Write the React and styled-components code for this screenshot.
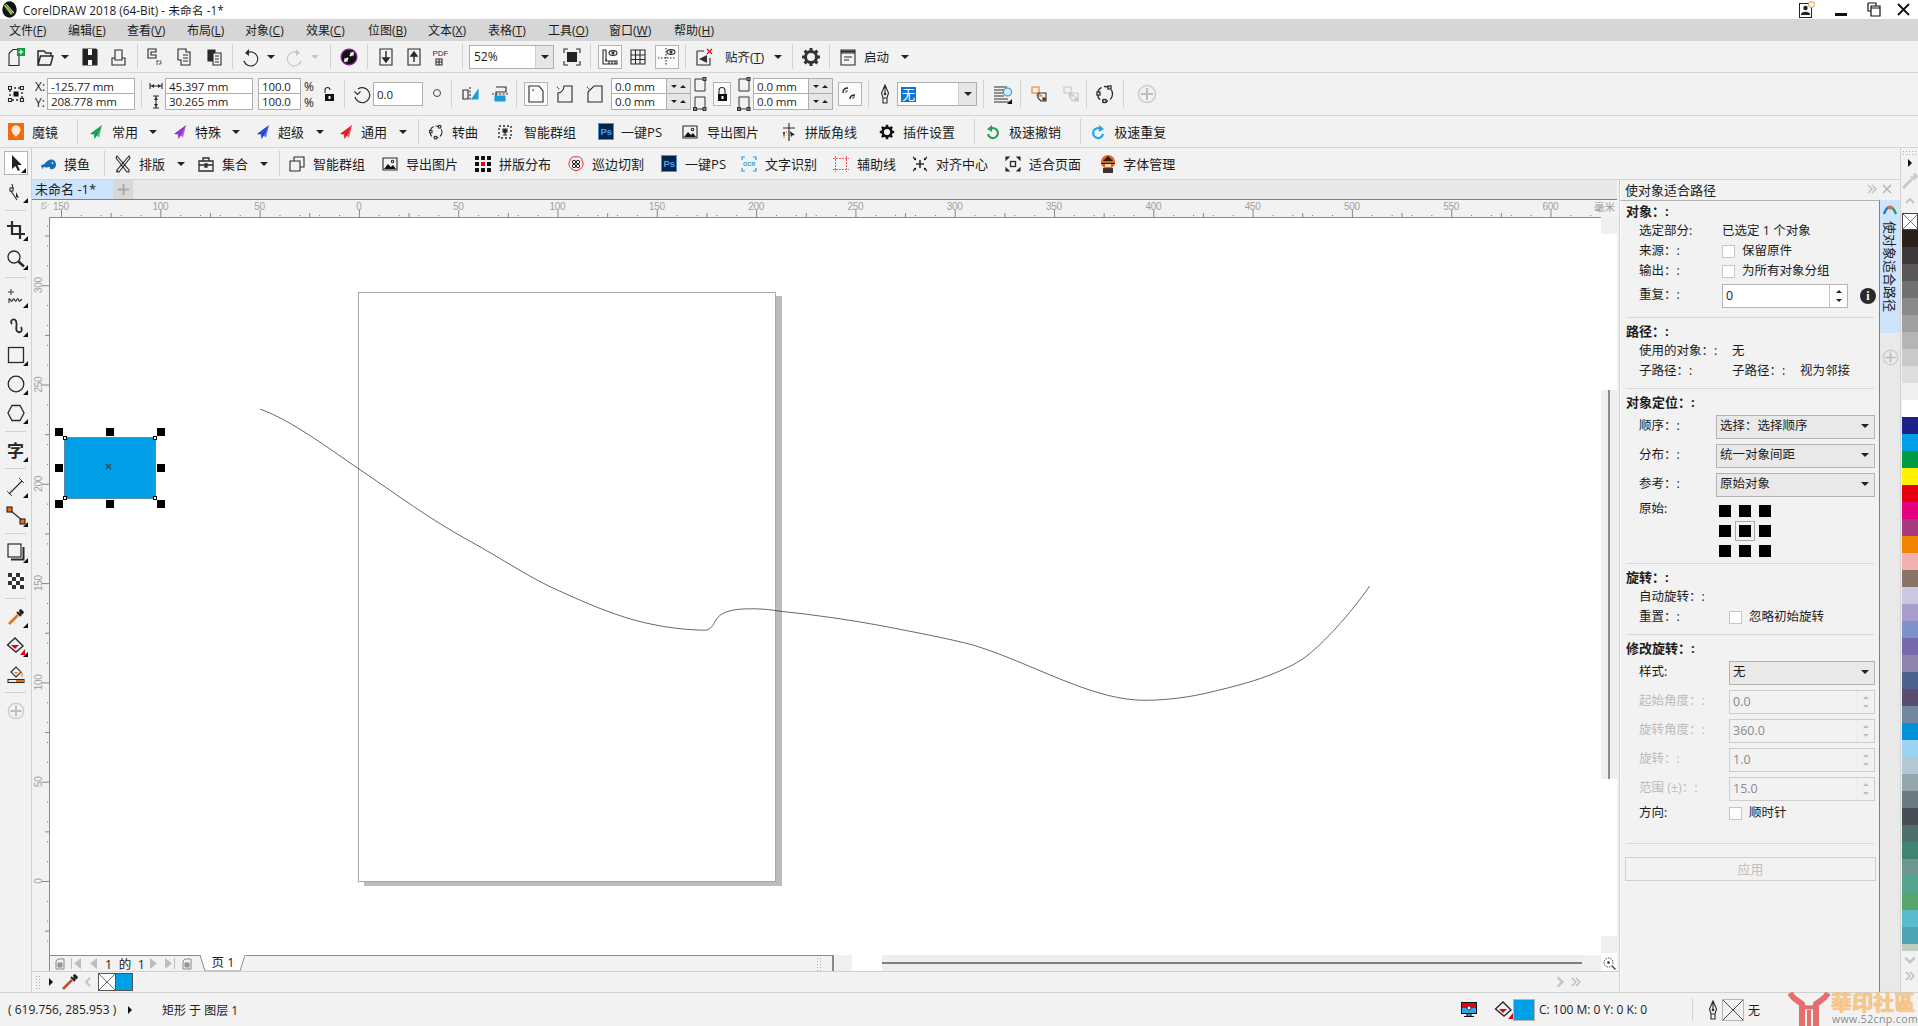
import React from "react";
import styled, { createGlobalStyle } from "styled-components";

const GlobalStyle = createGlobalStyle`
  html, body { margin: 0; padding: 0; background: #f2f2f2; }
  body { font-family: "Open Sans", "Noto Sans CJK SC", sans-serif; font-size: 13px; color: #1c1c1c; overflow: hidden; }
  * { box-sizing: border-box; }
  svg { display: block; flex: none; }
`;

const Page = styled.div`
  width: 1918px;
  height: 1026px;
  display: flex;
  flex-direction: column;
  overflow: hidden;
`;

const TitleBar = styled.div`
  height: 19px;
  background: #fff;
  display: flex;
  align-items: center;
  padding-left: 2px;
  font-size: 11.8px;
`;
const TitleText = styled.span`
  margin-left: 6px;
  flex: 1;
  white-space: nowrap;
`;
const WinBtn = styled.span`
  width: 30px;
  display: flex;
  justify-content: center;
  margin-left: ${(p) => p.$ml || 0}px;
`;

const MenuBar = styled.div`
  height: 22px;
  background: #d6d6d6;
  display: flex;
  align-items: center;
  padding-left: 9px;
  font-size: 12px;
`;
const MenuItem = styled.span`
  width: ${(p) => p.$w || 60}px;
  white-space: nowrap;
`;

const Bar = styled.div`
  height: ${(p) => p.$h || 32}px;
  flex: none;
  display: flex;
  align-items: center;
  border-bottom: 1px solid #d4d4d4;
  background: #f2f2f2;
  font-size: 12.5px;
  white-space: nowrap;
`;
const Sep = styled.span`
  width: 1px;
  flex: none;
  height: ${(p) => p.$h || 25}px;
  background: #d2d2d2;
  margin-left: ${(p) => p.$ml || 0}px;
`;
const Btn = styled.span`
  width: ${(p) => p.$w || 24}px;
  height: ${(p) => p.$hh || 24}px;
  flex: none;
  display: flex;
  align-items: center;
  justify-content: center;
  margin-left: ${(p) => p.$ml || 0}px;
  border: 1px solid ${(p) => (p.$on ? "#b4b4b4" : "transparent")};
  background: ${(p) => (p.$on ? "#fbfbfb" : "transparent")};
`;
const Caret = styled.span`
  flex: none;
  width: 0;
  height: 0;
  margin-left: ${(p) => (p.$ml || 0)}px;
  border-left: 4px solid transparent;
  border-right: 4px solid transparent;
  border-top: 4px solid ${(p) => p.$c || "#222"};
`;
const Plain = styled.span`
  flex: none;
  margin-left: ${(p) => p.$ml || 0}px;
  width: ${(p) => (p.$w ? `${p.$w}px` : "auto")};
`;
const ZoomCombo = styled.span`
  width: 85px;
  height: 24px;
  flex: none;
  margin-left: ${(p) => p.$ml || 0}px;
  border: 1px solid #aeaeae;
  background: #fff;
  display: flex;
  align-items: center;
  padding-left: 4px;
  font-size: 12px;
`;
const ComboDrop = styled.span`
  margin-left: auto;
  width: 18px;
  height: 100%;
  background: #e6e6e6;
  border-left: 1px solid #cfcfcf;
  display: flex;
  align-items: center;
  justify-content: center;
`;
const Stack = styled.span`
  display: flex;
  flex-direction: column;
  flex: none;
  width: ${(p) => p.$w}px;
  margin-left: ${(p) => p.$ml || 0}px;
`;
const FieldRow = styled.span`
  height: 16px;
  flex: none;
  display: flex;
  align-items: center;
  font-size: 11.5px;
`;
const Field = styled.span`
  height: ${(p) => p.$h || 17}px;
  flex: 1;
  display: flex;
  align-items: center;
  background: #fff;
  border: 1px solid #aeaeae;
  margin-top: ${(p) => (p.$second ? -1 : 0)}px;
  padding-left: 3px;
  font-size: 11.5px;
  letter-spacing: -0.1px;
`;
const BoxField = styled(Field)`
  flex: none;
  width: ${(p) => p.$w}px;
  margin-left: ${(p) => p.$ml || 0}px;
`;
const MiniSpin = styled.span`
  width: 25px;
  height: 17px;
  flex: none;
  margin-left: -1px;
  margin-top: ${(p) => (p.$second ? -1 : 0)}px;
  background: #e6e6e6;
  border: 1px solid #aeaeae;
  display: flex;
  align-items: center;
  justify-content: space-around;
  padding: 0 2px;
`;
const UpTri = styled.span`
  width: 0;
  height: 0;
  border-left: 3px solid transparent;
  border-right: 3px solid transparent;
  border-bottom: 3px solid #222;
`;
const DownTri = styled.span`
  width: 0;
  height: 0;
  border-left: 3px solid transparent;
  border-right: 3px solid transparent;
  border-top: 3px solid #222;
`;
const Axis = styled.span`
  height: 16px;
  display: flex;
  align-items: center;
  font-size: 12px;
`;
const NoneCombo = styled(ZoomCombo)`
  width: 80px;
  padding-left: 3px;
  font-size: 13px;
`;
const Picked = styled.span`
  background: #0a78d7;
  color: #fff;
  padding: 0 1px;
  line-height: 15px;
`;

const Action = styled.span`
  display: flex;
  align-items: center;
  flex: none;
  margin-left: ${(p) => p.$ml || 0}px;
  gap: ${(p) => p.$gap || 8}px;
  font-size: 13px;
`;

const Main = styled.div`
  flex: 1;
  display: flex;
  min-height: 0;
`;
const ToolBox = styled.div`
  width: 32px;
  flex: none;
  border-right: 1px solid #d0d0d0;
  display: flex;
  flex-direction: column;
  background: #f2f2f2;
`;
const Tool = styled.div`
  height: 29px;
  flex: none;
  display: flex;
  align-items: center;
  justify-content: center;
  position: relative;
  &::after {
    content: "";
    display: ${(p) => (p.$corner === false ? "none" : "block")};
    position: absolute;
    right: 3px;
    bottom: 3px;
    width: 0;
    height: 0;
    border-left: 5px solid transparent;
    border-bottom: 5px solid #111;
  }
`;
const SelectedTool = styled(Tool)`
  height: 24px;
  margin: 3px 3px 2px 4px;
  background: #fff;
  border: 1px solid #b4b4b4;
  &::after { right: 1px; bottom: 1px; }
`;
const TextGlyph = styled.span`
  font-size: 17px;
  font-weight: 700;
  line-height: 20px;
  color: #2a2a2a;
`;
const ToolSep = styled.div`
  height: 1px;
  margin: ${(p) => p.$m || 3}px 5px;
  flex: none;
  background: #d2d2d2;
`;

const Center = styled.div`
  flex: 1;
  min-width: 0;
  display: flex;
  flex-direction: column;
`;
const Work = styled.div`
  flex: 1;
  display: flex;
  min-height: 0;
`;
const DocColumn = styled.div`
  width: 1587px;
  flex: none;
  display: flex;
  flex-direction: column;
`;
const TabBar = styled.div`
  height: 20px;
  flex: none;
  margin-right: 2px;
  background: #e8e8e8;
  border-bottom: 1px solid #1ba1e2;
  display: flex;
  font-size: 13px;
`;
const DocTab = styled.div`
  width: 81px;
  background: #cde4fc;
  padding-left: 3px;
  line-height: 18px;
  white-space: nowrap;
`;
const AddTab = styled.div`
  width: 20px;
  background: #d8d8d8;
  display: flex;
  align-items: center;
  justify-content: center;
`;
const RulerRow = styled.div`
  height: 17px;
  flex: none;
  position: relative;
`;
const RulerUnit = styled.span`
  position: absolute;
  right: 3px;
  top: 0;
  font-size: 10.5px;
  line-height: 14px;
  color: #999;
  width: 22px;
  background: #f2f2f2;
`;
const CanvasRow = styled.div`
  flex: 1;
  display: flex;
  min-height: 0;
`;
const Canvas = styled.div`
  flex: 1;
  position: relative;
  overflow: hidden;
  background: #fff;
  border-top: 1px solid #8a8a8a;
  border-left: 1px solid #8a8a8a;
`;
const PaperPage = styled.div`
  position: absolute;
  left: 308px;
  top: 74px;
  width: 418px;
  height: 590px;
  background: #fff;
  border: 1px solid #a8a8a8;
  box-shadow: 6px 4px 0 #bcbcbc;
`;
const BlueRect = styled.div`
  position: absolute;
  left: 14px;
  top: 219px;
  width: 92px;
  height: 62px;
  background: #00a0e9;
  border: 1px solid #5a8aa3;
`;
const Handle = styled.div`
  position: absolute;
  width: 8px;
  height: 8px;
  background: #000;
`;
const NodeDot = styled.div`
  position: absolute;
  width: 4px;
  height: 4px;
  background: #fff;
  border: 1px solid #000;
`;
const CenterMark = styled.div`
  position: absolute;
  left: 55px;
  top: 245px;
`;
const CurveLayer = styled.svg`
  position: absolute;
  left: 0;
  top: 0;
`;
const VScroll = styled.div`
  width: 16px;
  flex: none;
  background: #fff;
  display: flex;
  flex-direction: column;
`;
const ScrollCap = styled.div`
  height: 17px;
  flex: none;
  background: #efefef;
`;
const ThumbZone = styled.div`
  height: 389px;
  flex: none;
  margin: 156px 0 157px;
  background: #efefef;
  display: flex;
  justify-content: center;
`;
const ThumbLine = styled.div`
  width: 2px;
  background: #8c8c8c;
`;
const Gutter = styled.div`
  width: 2px;
  flex: none;
  background: #f2f2f2;
`;

const ScrollRow = styled.div`
  height: 17px;
  flex: none;
  display: flex;
  border-bottom: 1px solid #d0d0d0;
`;
const NavLeft = styled.div`
  width: 17px;
  flex: none;
`;
const PageNav = styled.div`
  width: 785px;
  flex: none;
  display: flex;
  align-items: center;
  border: 1px solid #8a8a8a;
  border-width: 1px 2px 0 1px;
  font-size: 12.5px;
  position: relative;
  background: #f2f2f2;
`;
const PageTab = styled.div`
  position: absolute;
  left: 150px;
  top: -1px;
  width: 46px;
  height: 17px;
  background: #fff;
  clip-path: polygon(0 0, 100% 0, 87% 100%, 10% 100%);
  text-align: center;
  font-size: 12.5px;
  line-height: 16px;
`;
const PageTabLine = styled.svg`
  position: absolute;
  left: 150px;
  top: -1px;
`;
const ScrollFill = styled.div`
  width: ${(p) => p.$w}px;
  flex: none;
  background: ${(p) => p.$bg || "#efefef"};
`;
const HTrack = styled.div`
  width: 700px;
  flex: none;
  background: #eeeeee;
  display: flex;
  align-items: center;
`;
const HThumb = styled.div`
  width: 100%;
  height: 2px;
  background: #808080;
`;
const ZoomCorner = styled.div`
  width: 16px;
  flex: none;
  background: #fff;
  display: flex;
  align-items: center;
  justify-content: center;
`;
const DocPalette = styled.div`
  height: 20px;
  flex: none;
  display: flex;
  align-items: center;
`;
const DotGrip = styled.span`
  width: ${(p) => p.$w || 5}px;
  height: ${(p) => p.$h || 15}px;
  flex: none;
  margin-left: ${(p) => p.$ml || 0}px;
  background-image: radial-gradient(#b0b0b0 0.6px, transparent 0.8px);
  background-size: 3px 3px;
`;
const RightTri = styled.span`
  flex: none;
  margin-left: ${(p) => p.$ml || 0}px;
  width: 0;
  height: 0;
  border-top: 4px solid transparent;
  border-bottom: 4px solid transparent;
  border-left: 4px solid #111;
`;
const DocSwatch = styled.span`
  width: 18px;
  height: 18px;
  flex: none;
  margin-left: ${(p) => p.$ml || 0}px;
  border: 1px solid #555;
  background: ${(p) => p.$c || "#fff"};
  display: flex;
`;

const Docker = styled.div`
  flex: 1;
  display: flex;
  flex-direction: column;
  border-left: 1px solid #cfcfcf;
  min-width: 0;
`;
const DockerHead = styled.div`
  height: 20px;
  flex: none;
  display: flex;
  align-items: center;
  border-left: 1px solid #fff;
  padding: 0 0 2px 4px;
  font-size: 13px;
`;
const HeadTitle = styled.span`
  flex: 1;
`;
const DockerBody = styled.div`
  flex: 1;
  display: flex;
  min-height: 0;
`;
const Panel = styled.div`
  width: 260px;
  flex: none;
  border-top: 1px solid #b3b3b3;
  border-left: 1px solid #fff;
  border-right: 1px solid #1ba1e2;
  padding: 1px 4px 0 5px;
  display: flex;
  flex-direction: column;
  font-size: 12.5px;
`;
const SectionTitle = styled.div`
  height: 20px;
  flex: none;
  line-height: 19px;
  font-weight: 700;
  font-size: 13px;
  margin-top: ${(p) => p.$mt || 0}px;
`;
const Row = styled.div`
  height: ${(p) => (p.$top ? "auto" : `${p.$h || 20}px`)};
  flex: none;
  display: flex;
  align-items: ${(p) => (p.$top ? "flex-start" : "center")};
  padding-left: 13px;
  padding-bottom: ${(p) => (p.$h || p.$top ? 0 : 2)}px;
  margin-top: ${(p) => p.$mt || 0}px;
  line-height: 18px;
  white-space: nowrap;
`;
const Lbl = styled.span`
  width: ${(p) => p.$w || 83}px;
  flex: none;
  line-height: 18px;
  margin-top: ${(p) => (p.$up ? -2 : 0)}px;
  color: ${(p) => (p.$off ? "#bbbbbb" : "inherit")};
`;
const Rule = styled.div`
  height: 1px;
  flex: none;
  margin: ${(p) => p.$mt}px 1px 0 1px;
  background: #d8d8d8;
`;
const Check = styled.span`
  width: 13px;
  height: 13px;
  flex: none;
  background: #fff;
  border: 1px solid #c6c6c6;
  margin-right: 7px;
`;
const SpinBox = styled.span`
  height: 24px;
  width: ${(p) => (p.$w ? `${p.$w}px` : "auto")};
  flex: ${(p) => (p.$w ? "none" : "1")};
  display: flex;
  align-items: center;
  padding-left: 3px;
  position: relative;
  background: ${(p) => (p.$off ? "#f2f2f2" : "#fff")};
  color: ${(p) => (p.$off ? "#8a8a8a" : "inherit")};
  border: 1px solid ${(p) => (p.$off ? "#cdcdcd" : "#b3b3b3")};
`;
const SpinArrows = styled.span`
  margin-left: auto;
  width: 18px;
  height: 100%;
  border-left: 1px solid ${(p) => (p.$off ? "#d8d8d8" : "#c4c4c4")};
  display: flex;
  flex-direction: column;
  align-items: center;
  justify-content: space-evenly;
  opacity: ${(p) => (p.$off ? 0.25 : 1)};
`;
const Select = styled.span`
  height: 24px;
  flex: 1;
  display: flex;
  align-items: center;
  justify-content: space-between;
  padding: 0 5px 2px 3px;
  background: #e9e9e9;
  border: 1px solid #b3b3b3;
`;
const InfoDot = styled.span`
  width: 16px;
  height: 16px;
  flex: none;
  margin-left: 12px;
  border-radius: 50%;
  background: #2a2a2a;
  color: #fff;
  font: 700 12px/16px "Liberation Serif", serif;
  text-align: center;
`;
const OriginGrid = styled.div`
  display: grid;
  grid-template-columns: repeat(3, 12px);
  gap: 8px;
  padding: 5px 0 0 3px;
`;
const OriginDot = styled.span`
  width: 12px;
  height: 12px;
  background: #000;
  outline: ${(p) => (p.$on ? "1px solid #aaa" : "none")};
  outline-offset: 3px;
`;
const ApplyBtn = styled.div`
  height: 24px;
  flex: none;
  margin: 13px -1px 0 -1px;
  border: 1px solid #d0d0d0;
  color: #c0c0c0;
  text-align: center;
  line-height: 22px;
  font-size: 13px;
`;
const TabStrip = styled.div`
  flex: 1;
  background: #e9e9e9;
  display: flex;
  flex-direction: column;
  align-items: center;
`;
const VTab = styled.div`
  width: 100%;
  height: 133px;
  background: #cde4fc;
  display: flex;
  flex-direction: column;
  align-items: center;
  padding-top: 5px;
`;
const VTabText = styled.span`
  writing-mode: vertical-rl;
  text-orientation: sideways;
  margin-top: 5px;
  font-size: 13px;
  line-height: 18px;
  white-space: nowrap;
`;
const VPlus = styled.span`
  margin-top: 16px;
`;

const Palette = styled.div`
  width: 18px;
  flex: none;
  border-left: 1px solid #d0d0d0;
  display: flex;
  flex-direction: column;
  align-items: stretch;
`;
const PaletteTop = styled.div`
  height: 65px;
  flex: none;
  display: flex;
  flex-direction: column;
  align-items: center;
  padding-top: 2px;
  gap: 4px;
`;
const Swatches = styled.div`
  height: 738px;
  flex: none;
  margin-left: 1px;
  overflow: hidden;
`;
const Swatch = styled.div`
  height: 17px;
  background: ${(p) => p.$c};
`;
const NoneSwatch = styled.div`
  height: 17px;
  background: #fff;
  border: 1px solid #444;
`;
const PaletteEnd = styled.div`
  flex: 1;
  display: flex;
  flex-direction: column;
  align-items: center;
  padding-top: 2px;
  gap: 3px;
`;

const StatusBar = styled.div`
  height: 34px;
  flex: none;
  border-top: 1px solid #d0d0d0;
  display: flex;
  align-items: center;
  font-size: 12px;
  position: relative;
  white-space: nowrap;
`;
const StatusSwatch = styled.span`
  width: 22px;
  height: 22px;
  flex: none;
  background: #00a0e9;
  border: 1px solid #b5b5b5;
`;
const NoneBox = styled.span`
  width: 22px;
  height: 22px;
  flex: none;
  margin-left: 1px;
  border: 1px solid #b5b5b5;
`;
const Watermark = styled.div`
  position: absolute;
  right: 0;
  top: -3px;
  width: 130px;
  height: 37px;
`;
const WatermarkName = styled.div`
  position: absolute;
  left: 43px;
  top: 0;
  width: 87px;
  height: 23px;
  font: 700 21px/23px "Noto Sans CJK TC", "Noto Sans CJK SC", sans-serif;
  color: #f7c98b;
  text-shadow: 0 0 1px #e98a3c;
  white-space: nowrap;
`;
const WatermarkUrl = styled.div`
  position: absolute;
  left: 44px;
  top: 23px;
  font: 10.5px/13px "Open Sans", sans-serif;
  letter-spacing: 0.4px;
  color: #8a8a8a;
`;

/* icons */
const Ic = ({ w = 20, h = 20, children, ...rest }) => (
  <svg width={w} height={h} viewBox={`0 0 ${w} ${h}`} fill="none" stroke="#2a2a2a" strokeWidth="1.1" {...rest}>
    {children}
  </svg>
);
const NewDocIcon = () => (
  <Ic>
    <path d="M3 18.5V6.5l4-4h6v16z" />
    <rect x="11" y="1" width="8" height="8" fill="#149a3e" stroke="none" />
    <path d="M15 2.5v5M12.5 5h5" stroke="#fff" />
  </Ic>
);
const OpenIcon = () => (
  <Ic>
    <path d="M3 18V4h6l2 2h5v3M3 18l2.5-9H18l-2.5 9z" strokeWidth="1.5" />
  </Ic>
);
const SaveIcon = () => (
  <Ic>
    <path d="M3 2h13l1 1v15H3z" fill="#222" />
    <rect x="8" y="2" width="4" height="6" fill="#fff" stroke="none" />
    <rect x="8" y="13" width="4" height="5" fill="#fff" stroke="none" />
  </Ic>
);
const PrintIcon = () => (
  <Ic>
    <path d="M6 11V3h7v8M3 11h3v2h7v-2h3v7H3z" />
  </Ic>
);
const CutIcon = () => (
  <Ic>
    <path d="M4 2h8v3H7v3h5v3H4zM7 5h5" />
    <path d="M13 14h4v3h-4z" strokeDasharray="1.5 1" />
  </Ic>
);
const CopyIcon = () => (
  <Ic>
    <path d="M4 2h8v3h4v13H7v-5H4zM9 8h5M9 11h5M9 14h5" />
  </Ic>
);
const PasteIcon = () => (
  <Ic>
    <path d="M4 3h7v11H4z" fill="#2a2a2a" />
    <path d="M9 6h8v12H9zM11 9h4M11 12h4M11 15h4" fill="#f2f2f2" />
  </Ic>
);
const UndoIcon = ({ flip, c = "#2a2a2a" }) => (
  <Ic stroke={c} style={flip ? { transform: "scaleX(-1)" } : undefined}>
    <path d="M7 6a7 7 0 1 1-3 8" />
    <path d="M4 14a7 7 0 0 0 2 3" strokeDasharray="1.5 1.5" />
    <path d="M9 2v7L5 6z" fill={c} stroke="none" />
  </Ic>
);
const ConnectIcon = () => (
  <Ic>
    <circle cx="10" cy="10" r="7.8" fill="#111" stroke="#7a1f9e" strokeWidth="1.4" />
    <path d="M14.5 5.5L11 9M5.5 14.5L9 11" stroke="#fff" strokeWidth="1.8" />
    <path d="M10.5 5.5h4v4zM9.5 14.5h-4v-4z" fill="#fff" stroke="none" />
  </Ic>
);
const ImportIcon = ({ up }) => (
  <Ic>
    <path d="M4 2h12v16H4z" />
    <path d={up ? "M10 15V7M7 9l3-4 3 4z" : "M10 4v9M7 11l3 4 3-4z"} strokeWidth="1.4" fill="#2a2a2a" />
  </Ic>
);
const PdfIcon = () => (
  <Ic>
    <text x="0.5" y="9" fontSize="8" stroke="none" fill="#333" fontFamily="Liberation Sans">PDF</text>
    <path d="M4 12h6v6H4zM7 12v6M4 15h6" />
  </Ic>
);
const FullIcon = () => (
  <Ic>
    <path d="M2 6V2h4M14 2h4v4M18 14v4h-4M6 18H2v-4" />
    <rect x="5" y="5" width="10" height="10" fill="#222" stroke="none" />
  </Ic>
);
const RulerIcon = () => (
  <Ic>
    <path d="M3 3h3v11h11v3H3z" />
    <ellipse cx="13" cy="6" rx="4" ry="2.4" />
    <circle cx="13" cy="6" r="1" fill="#222" />
    <path d="M6 14v-2M9 17v-3M12 17v-3M15 17v-3" />
  </Ic>
);
const GridIcon = () => (
  <Ic>
    <path d="M3 3h14v14H3zM3 8h14M3 12.5h14M7.5 3v14M12 3v14" />
  </Ic>
);
const GuideIcon = () => (
  <Ic>
    <path d="M9 1v18M1 11h18" strokeDasharray="1.5 1.5" />
    <ellipse cx="14" cy="5" rx="4" ry="2.4" />
    <circle cx="14" cy="5" r="1" fill="#222" />
  </Ic>
);
const SnapIcon = () => (
  <Ic>
    <path d="M3 4h7M3 4v14h13v-7" />
    <path d="M13 8L5 12l8 4z" fill="#333" stroke="none" />
    <path d="M13 2l5 5M18 2l-5 5" stroke="#e60012" />
  </Ic>
);
const GearIcon = ({ c = "#222" }) => (
  <Ic stroke={c}>
    <circle cx="10" cy="10" r="5.5" strokeWidth="3" />
    <path d="M10 1v4M10 15v4M1 10h4M15 10h4M3.6 3.6l3 3M13.4 13.4l3 3M16.4 3.6l-3 3M6.6 13.4l-3 3" strokeWidth="3" />
  </Ic>
);
const WindowIcon = () => (
  <Ic>
    <path d="M3 3h14v15H3zM3 6h14" />
    <path d="M3 4.5h14" strokeWidth="2" />
    <path d="M6 10h8M6 13h5" />
  </Ic>
);
const OriginIcon = () => (
  <Ic>
    <path d="M4 4h12v12H4z" strokeDasharray="2 2" strokeWidth="1.4" />
    <rect x="2.5" y="2.5" width="3" height="3" fill="#f2f2f2" />
    <rect x="14.5" y="2.5" width="3" height="3" fill="#f2f2f2" />
    <rect x="2.5" y="14.5" width="3" height="3" fill="#f2f2f2" />
    <rect x="14.5" y="14.5" width="3" height="3" fill="#f2f2f2" />
    <rect x="7.5" y="7.5" width="5" height="5" fill="#111" stroke="none" />
  </Ic>
);
const WidthIcon = () => (
  <Ic w={14} h={14}>
    <path d="M1 4v6M13 4v6M1 7h12" />
    <path d="M2 7l3-2v4zM12 7l-3-2v4z" fill="#2a2a2a" stroke="none" />
  </Ic>
);
const HeightIcon = () => (
  <Ic w={14} h={14}>
    <path d="M4 1h6M4 13h6M7 1v12" />
    <path d="M7 2L5 5h4zM7 12L5 9h4z" fill="#2a2a2a" stroke="none" />
  </Ic>
);
const PadLock = ({ open }) => (
  <Ic w={14} h={16}>
    <path d={open ? "M3 7V4a2.5 2.5 0 0 1 5 0" : "M4 8V4.5a3 3 0 0 1 6 0V8"} />
    <rect x="3" y="8" width="9" height="7" fill="#111" stroke="none" />
    <rect x="6.5" y="10" width="2" height="3" fill="#fff" stroke="none" />
  </Ic>
);
const RotateIcon = () => (
  <Ic>
    <path d="M6 5a7.5 7.5 0 1 1-3 8" />
    <path d="M2.5 7.5l3 3 3-3" />
  </Ic>
);
const MirrorH = () => (
  <Ic>
    <path d="M3 6h5v9H3z" />
    <path d="M10 3v14" strokeDasharray="2 1.5" />
    <path d="M12 15h6V6z" fill="#1b9ad6" stroke="#1b9ad6" />
  </Ic>
);
const MirrorV = () => (
  <Ic>
    <path d="M6 3h10v5H6v4" />
    <path d="M2 10h16" strokeDasharray="2 1.5" />
    <path d="M5 12h10v5H5z" fill="#1b9ad6" stroke="#1b9ad6" />
  </Ic>
);
const CornerRound = () => (
  <Ic>
    <path d="M3 18V2h10l4 5v11z" />
    <path d="M7 7v-1h1" />
  </Ic>
);
const CornerScallop = ({ inv }) => (
  <Ic>
    <path d={inv ? "M3 18V8l6-6h8v16z" : "M3 18V9c3 0 6-3 6-7h8v16z"} />
    <path d="M2 3l3 3" strokeDasharray="1 1" />
  </Ic>
);
const CornerStacked = () => (
  <svg width="14" height="34" viewBox="0 0 14 34" fill="none" stroke="#333">
    <path d="M2 2h10v12H2zM2 20h10v12H2z" />
    <rect x="10" y="0.5" width="3" height="3" fill="#888" />
    <rect x="0.5" y="30.5" width="3" height="3" fill="#888" />
    <rect x="10" y="30.5" width="3" height="3" fill="#888" />
  </svg>
);
const ScaleCorner = () => (
  <Ic>
    <path d="M3 9c0-3 2-5 5-5M10 15c0-3 2-4 5-4" strokeWidth="1.4" />
    <path d="M6 9V7h2M13 15v-2h2" strokeWidth=".8" />
  </Ic>
);
const PenNib = () => (
  <Ic>
    <path d="M10 1L6.5 9 8 14h4l1.500-5zM10 1v8M8 14v5h4v-5" />
    <circle cx="10" cy="10" r=".8" fill="#222" />
  </Ic>
);
const WrapIcon = () => (
  <Ic>
    <path d="M1 3h13M1 6h10M1 9h9M1 12h10M1 15h14M1 18h16" />
    <circle cx="14.500" cy="8" r="4" stroke="#1b9ad6" fill="#d9eefb" />
    <path d="M19 20h-5l5-5z" fill="#111" stroke="none" />
  </Ic>
);
const BackMinus = ({ off }) => (
  <Ic stroke={off ? "#c4c4c4" : "#333"}>
    <path d="M3 3h7v7l3 2h-5V9H3z" stroke={off ? "#c4c4c4" : "#f07c1e"} />
    <path d="M9 9h8v8h-5l-3-3z" />
    <path d="M14 14h2v2h-2z" fill={off ? "#c4c4c4" : "#333"} />
  </Ic>
);
const ConvertIcon = ({ s = 20 }) => (
  <svg width={s} height={s} viewBox="0 0 20 20" fill="none" stroke="#2a2a2a" strokeWidth="1.300">
    <circle cx="10" cy="10" r="7.500" strokeDasharray="6 2.500" />
    <rect x="13" y="2" width="3" height="3" fill="#f2f2f2" />
    <rect x="2" y="8" width="3" height="3" fill="#f2f2f2" />
    <rect x="8" y="15.500" width="3" height="3" fill="#f2f2f2" />
  </svg>
);
const PlusRound = ({ s = 20 }) => (
  <svg width={s} height={s} viewBox="0 0 20 20" fill="none">
    <circle cx="10" cy="10" r="8.500" stroke="#cccccc" strokeWidth="1.6" />
    <path d="M10 4v12M4 10h12" stroke="#bdbdbd" strokeWidth="2" />
  </svg>
);
const Mirror = () => (
  <svg width="16" height="17" viewBox="0 0 16 17">
    <rect width="16" height="17" fill="#f26a12" />
    <path d="M8 2.500c-3 0-4.500 2-4.500 4.500 0 3 3 5 4.500 7 1.500-2 4.500-4 4.500-7 0-2.500-1.500-4.500-4.500-4.500z" fill="#ffe9cf" />
  </svg>
);
const Plane = ({ c }) => (
  <svg width="16" height="16" viewBox="0 0 16 16">
    <path d="M14 1L2 10l4 .5z" fill={c} />
    <path d="M14 1L7 10l4 3.500z" fill={c} opacity=".7" />
    <path d="M14 1L6 10.500 6.500 15l2-3z" fill={c} />
  </svg>
);
const SmartGroup = () => (
  <Ic w={16} h={16}>
    <path d="M2 2h12v12H2z" strokeDasharray="2 2" strokeWidth="1.4" />
    <path d="M6 5h4v3H6zM8 8v3M6 11h4" />
    <circle cx="8" cy="7" r="1.400" fill="#222" />
  </Ic>
);
const PsBadge = () => (
  <svg width="16" height="17" viewBox="0 0 16 17">
    <rect x=".5" y=".5" width="15" height="16" fill="#06234a" stroke="#4f8fd8" />
    <text x="2.500" y="12" fontSize="9.500" fontWeight="700" fill="#43a5ee" fontFamily="Liberation Sans">Ps</text>
  </svg>
);
const PictureIcon = () => (
  <Ic w={16} h={16}>
    <path d="M1 2h14v12H1z" />
    <path d="M2 13l4-5 3 3 2-2 3 4z" fill="#111" stroke="none" />
    <circle cx="10.500" cy="5.500" r="1.200" />
  </Ic>
);
const CropMarks = () => (
  <Ic w={16} h={18}>
    <path d="M8 0v18M2 5h12" />
    <path d="M5 9h3v8" stroke="#555" strokeDasharray="1 1" />
    <path d="M9 8l5 4-3 .5-1 2z" fill="#222" stroke="none" />
    <path d="M3 9v2" stroke="#e60012" strokeWidth="2" />
    <path d="M3 11v2" stroke="#2aa7e8" strokeWidth="2" />
    <path d="M3 13v2" stroke="#f5d21a" strokeWidth="2" />
  </Ic>
);
const GearSmall = () => (
  <svg width="16" height="16" viewBox="0 0 20 20" fill="none" stroke="#111">
    <circle cx="10" cy="10" r="5.500" strokeWidth="3.200" />
    <path d="M10 1v4M10 15v4M1 10h4M15 10h4M3.600 3.600l3 3M13.400 13.400l3 3M16.400 3.600l-3 3M6.600 13.400l-3 3" strokeWidth="3" />
  </svg>
);
const SpinArrow = ({ c, flip }) => (
  <svg width="16" height="16" viewBox="0 0 16 16" fill="none" style={flip ? { transform: "scaleX(-1)" } : undefined}>
    <path d="M5 5a5 5 0 1 1-2 5" stroke={c} strokeWidth="2.200" />
    <path d="M7 1v7L2 5z" fill={c} />
  </svg>
);
const FishIcon = () => (
  <svg width="16" height="14" viewBox="0 0 18 14">
    <path d="M1 9c2-1 3-2 4-2 2-3 5-5 8-5 3 0 5 3 5 6 0 3-3 5-6 5-1-1-1-2-1-3l-3 1c-2 0-3-1-4-1l-1 3z" fill="#136fb5" />
    <circle cx="14" cy="6" r="1" fill="#fff" />
  </svg>
);
const ImposeIcon = () => (
  <Ic w={16} h={18}>
    <path d="M2 1l12 14v2h-2L1 3zM14 1L2 15v2h2L15 3z" />
    <path d="M2 15l-1 2h3z" fill="#333" stroke="none" />
  </Ic>
);
const BoxIcon = () => (
  <Ic w={16} h={16}>
    <path d="M1 5h14v10H1zM5 5V2h6v3M1 9h14M7 8h2v3H7z" strokeWidth="1.300" />
  </Ic>
);
const GroupOutline = () => (
  <Ic w={16} h={16}>
    <path d="M1 5h10v10H1zM5 5V1h10v10h-4" />
  </Ic>
);
const DotsIcon = () => (
  <svg width="16" height="16" viewBox="0 0 16 16">
    {[0, 1, 2].flatMap((r) =>
      [0, 1, 2].map((c) => (
        <rect key={`${r}${c}`} x={c * 6} y={r * 6} width="4" height="4" fill={r === 1 && c === 1 ? "#e60012" : "#111"} />
      ))
    )}
  </svg>
);
const ContourIcon = () => (
  <svg width="16" height="16" viewBox="0 0 16 16" fill="none">
    <path d="M8 1c3-1 7 1 6 4 2 2 1 7-2 8-2 2-6 2-8 0-3-1-4-6-2-8C2 2 5 0 8 1z" stroke="#e0252c" />
    <circle cx="6" cy="6" r="1.700" stroke="#222" />
    <circle cx="10" cy="6" r="1.700" stroke="#222" />
    <circle cx="6" cy="10" r="1.700" stroke="#222" />
    <circle cx="10" cy="10" r="1.700" stroke="#222" />
  </svg>
);
const OcrIcon = () => (
  <svg width="16" height="16" viewBox="0 0 16 16" fill="none">
    <path d="M1 4V1h3M12 1h3v3M15 12v3h-3M4 15H1v-3" stroke="#1d9be0" strokeWidth="1.200" />
    <text x="8" y="10" textAnchor="middle" fontSize="5.500" fontWeight="700" fill="#1d9be0" fontFamily="Liberation Sans">OCR</text>
  </svg>
);
const GuideBox = () => (
  <svg width="16" height="16" viewBox="0 0 16 16" fill="none">
    <path d="M2.500 0v16M13.500 0v16M0 2.500h16M0 13.500h16" stroke="#ee5a5a" strokeDasharray="2 1" />
  </svg>
);
const AlignCenter = () => (
  <Ic w={16} h={16}>
    <path d="M8 4v8M4 8h8" strokeWidth="1.600" />
    <path d="M1 1l3 3M15 1l-3 3M1 15l3-3M15 15l-3-3" />
    <path d="M4 1.500V4H1.500zM12 1.500V4h2.500zM4 14.500V12H1.500zM12 14.500V12h2.500z" fill="#222" stroke="none" />
  </Ic>
);
const FitPage = () => (
  <Ic w={16} h={16}>
    <rect x="5.500" y="5.500" width="5" height="5" strokeWidth="1.300" />
    <path d="M1 1h3L1 4zM15 1h-3l3 3zM1 15h3l-3-3zM15 15h-3l3-3z" fill="#222" />
  </Ic>
);
const FontAvatar = () => (
  <svg width="16" height="18" viewBox="0 0 16 18">
    <circle cx="8" cy="7" r="7" fill="#d9651e" />
    <path d="M3 6h10L8 1z" fill="#2a1c12" />
    <path d="M1 8h14v1H1z" fill="#2a1c12" />
    <path d="M5 9h6v3H5z" fill="#f6d7b0" />
    <path d="M3 13h10v5H3z" fill="#3b3430" />
  </svg>
);
const ArrowTool = () => (
  <Ic>
    <path d="M6 2v14l3.500-3 2.500 5 2-1-2.500-5H16z" fill="#222" stroke="none" />
  </Ic>
);
const ShapeTool = () => (
  <Ic>
    <path d="M6 2l1 5-2 2 6 9" />
    <rect x="4" y="6" width="3" height="3" fill="#fff" />
    <path d="M10 10l3 6-3-1z" fill="#222" stroke="none" />
  </Ic>
);
const CropTool = () => (
  <Ic>
    <path d="M6 1v13h13M1 6h13v13" strokeWidth="2.200" />
  </Ic>
);
const ZoomTool = () => (
  <Ic>
    <circle cx="8" cy="8" r="6" strokeWidth="1.300" />
    <path d="M12.500 12.500l5.500 5" strokeWidth="2.500" />
  </Ic>
);
const FreehandTool = () => (
  <Ic>
    <path d="M5 2v6M2 5h6" strokeWidth=".9" />
    <path d="M3 16v-4c1-1 2 3 3 2s1-3 2-2 1 3 2 2 1-3 2-2 1 3 2 2 1-2 2-1" />
  </Ic>
);
const CurveTool = () => (
  <Ic>
    <path d="M6 8c-3-3 2-7 4-3 2 5-2 9 2 11 3 1 5-2 3-5" strokeWidth="1.800" />
  </Ic>
);
const RectTool = () => (
  <Ic><rect x="2.500" y="2.500" width="15" height="15" strokeWidth="1.300" /></Ic>
);
const EllipseTool = () => (
  <Ic><circle cx="10" cy="10" r="7.800" strokeWidth="1.300" /></Ic>
);
const PolyTool = () => (
  <Ic><path d="M6 2.500h8l4 7.500-4 7.500H6L2 10z" strokeWidth="1.300" /></Ic>
);
const LineTool = () => (
  <Ic>
    <path d="M3 17L16 4" />
    <path d="M1 14l5 5M13 1l5 5" strokeWidth=".9" />
  </Ic>
);
const ConnectorTool = () => (
  <Ic>
    <path d="M4 4l13 11" />
    <rect x="1" y="1" width="5" height="5" fill="#f26a12" stroke="#222" />
    <rect x="14" y="13" width="5" height="5" fill="#f26a12" stroke="#222" />
  </Ic>
);
const ShadowTool = () => (
  <Ic>
    <rect x="2" y="2" width="13" height="13" strokeWidth="1.200" />
    <path d="M17.500 5v12.500H5" strokeWidth="2" />
  </Ic>
);
const CheckerTool = () => (
  <svg width="16" height="16" viewBox="0 0 16 16">
    <rect width="16" height="16" fill="#333" />
    {[0, 1, 2, 3].flatMap((r) =>
      [0, 1, 2, 3].map((c) =>
        (r + c) % 2 ? <rect key={`${r}${c}`} x={c * 4} y={r * 4} width="4" height="4" fill="#fff" /> : null
      )
    )}
  </svg>
);
const EyeDrop = ({ tip = "#e8701a", c = "#222" }) => (
  <Ic stroke={c}>
    <path d="M3 17l9-9" stroke={tip} strokeWidth="2.600" />
    <path d="M11 5l4 4" strokeWidth="2" />
    <path d="M13 3l2-1 3 3-1 2-3 1z" fill={c} stroke="none" />
  </Ic>
);
const FillTool = () => (
  <Ic>
    <path d="M1.500 9L9 2l8 8-7 6z" strokeWidth="1.400" />
    <path d="M5 9l8 0-4 4z" fill="#e60012" stroke="none" />
    <path d="M19 13v6h-5z" fill="#e60012" stroke="none" />
  </Ic>
);
const SmartFill = () => (
  <Ic>
    <path d="M5 7l5-5 5 5-5 5z" />
    <path d="M8 7h4l-2 2z" fill="#e8701a" stroke="none" />
    <path d="M14 6l2 2v4" stroke="#e8701a" />
    <rect x="2" y="14.500" width="16" height="3" />
    <rect x="10" y="15" width="8" height="2" fill="#e8701a" stroke="none" />
  </Ic>
);
const MonitorIcon = () => (
  <svg width="16" height="16" viewBox="0 0 16 16">
    <rect x=".5" y=".5" width="15" height="11" fill="#fff" stroke="#111" />
    <rect x="1" y="1" width="14" height="5" fill="#e60012" />
    <rect x="1" y="6" width="14" height="5" fill="#2aa7e8" />
    <circle cx="8" cy="6" r="2" fill="#fff" stroke="#333" />
    <path d="M6 12h4v2H6zM3 14.500h10" stroke="#111" fill="none" />
  </svg>
);
const CrossBox = ({ s = 20 }) => (
  <svg width={s} height={s} viewBox="0 0 20 20" stroke="#333" strokeWidth=".9">
    <path d="M0 0l20 20M20 0L0 20" />
  </svg>
);
const Chevron = ({ d = "up", c = "#c4c4c4", s = 12 }) => (
  <svg width={s} height={s} viewBox="0 0 12 12" fill="none" stroke={c} strokeWidth="2">
    <path d={{ up: "M2 8l4-4 4 4", down: "M2 4l4 4 4-4", left: "M8 2L4 6l4 4", right: "M4 2l4 4-4 4" }[d]} />
  </svg>
);
const DoubleRight = ({ c = "#bdbdbd" }) => (
  <svg width="12" height="12" viewBox="0 0 12 12" fill="none" stroke={c} strokeWidth="1.400">
    <path d="M2 2l4 4-4 4M6 2l4 4-4 4" />
  </svg>
);
const AddPage = () => (
  <svg width="11" height="12" viewBox="0 0 11 12" fill="none" stroke="#888">
    <path d="M2 11V3l2-2h6v10z" />
    <path d="M4 5h4v4H4zM6 5v4M4 7h4" stroke="#555" strokeWidth=".7" />
  </svg>
);
const NavArrow = ({ dir, bar }) => (
  <svg width="12" height="11" viewBox="0 0 12 11" style={dir === "right" ? { transform: "scaleX(-1)" } : undefined}>
    {bar && <rect x="1" y="0" width="1" height="11" fill="#bdbdbd" />}
    <path d="M11 0v11L4 5.500z" fill="#bdbdbd" />
  </svg>
);
const ZoomDots = () => (
  <svg width="13" height="13" viewBox="0 0 13 13" fill="none" stroke="#444">
    <circle cx="5.500" cy="5.500" r="4.500" strokeDasharray="1.500 1" />
    <path d="M9 9l3.500 3.500" strokeWidth="1.400" />
    <circle cx="5.500" cy="5.500" r="1" fill="#444" />
  </svg>
);
const TitleLogo = () => (
  <svg width="15" height="17" viewBox="0 0 15 17">
    <ellipse cx="7.500" cy="8.500" rx="7.200" ry="8.200" fill="#141414" />
    <path d="M3 3l8 9-2 2-7-9z" fill="#8ec63f" />
    <path d="M4.500 3.500L12 12" stroke="#fff" strokeWidth="1" />
  </svg>
);
const UserIcon = () => (
  <svg width="16" height="18" viewBox="0 0 16 18" fill="none">
    <rect x=".5" y="2.500" width="12" height="14" stroke="#222" />
    <circle cx="6.500" cy="7" r="2.200" fill="#222" />
    <path d="M2 13c1-3 8-3 9 0v1H2z" fill="#222" />
    <circle cx="12.500" cy="3.500" r="3" fill="#f6f1ea" stroke="#e9822d" strokeWidth=".8" />
  </svg>
);
const PageCurve = () => (
  <CurveLayer width="1551" height="738" viewBox="49 218 1551 738" fill="none" stroke="#262626" strokeWidth=".7">
    <path d="M259.300 409.200C290 420 330 450 358 469C395 494 430 520 468.600 541C500 558 530 579 561.400 592.300C584 602.500 608 613 633 620C655 626 680 630 704 630.200C710 630 712 625 715 620C719 613 728 609.500 744 608.900C760 608.400 770 609.800 780 611.300C815 615 850 620 882 626C915 632.500 945 638 972 645C1005 655 1040 672 1070 683.300C1095 693 1120 700.300 1143.700 700.300C1165 700.300 1190 697 1209 692.300C1235 686 1255 681 1274 673C1287 667.500 1297 663 1307 655C1322 643 1348 616 1368.600 586" />
  </CurveLayer>
);

/* rulers */
const ZERO_X = 358.9;
const ZERO_Y = 881;
const UNIT = 1.986;
const rulerText = { fontSize: 10, fill: "#a0a0a0", fontFamily: "Liberation Sans", letterSpacing: "-0.3px" };

const HRuler = () => {
  const marks = [];
  for (let u = -160; u <= 640; u += 5) {
    const x = ZERO_X + u * UNIT - 32;
    if (x < 18 || x > 1566) continue;
    if (u % 50 === 0) {
      marks.push(<rect key={u} x={x} y="10" width="1" height="7" fill="#888" />);
      marks.push(<text key={`t${u}`} x={x} y="10" textAnchor="middle" style={rulerText}>{Math.abs(u)}</text>);
    } else if (Math.abs(u) % 50 === 25) {
      marks.push(<rect key={u} x={x} y="13" width="1" height="4" fill="#888" />);
    } else if (u % 10 === 0) {
      marks.push(<rect key={u} x={x} y="15" width="1" height="1" fill="#777" />);
    }
  }
  return (
    <svg width="1585" height="17" viewBox="0 0 1585 17">
      <path d="M10 3l5 5M10 3v5M10 3h5M17 4l-2 2M9 9l5-1" stroke="#aaa" fill="none" strokeWidth=".8" />
      {marks}
    </svg>
  );
};

const VRuler = () => {
  const marks = [];
  for (let u = -30; u <= 340; u += 5) {
    const y = ZERO_Y - u * UNIT - 217;
    if (y < 0) continue;
    if (u >= 0 && u % 50 === 0) {
      marks.push(<rect key={u} x="10" y={y} width="7" height="1" fill="#888" />);
      marks.push(
        <text key={`t${u}`} x="10" y={y} textAnchor="middle" transform={`rotate(-90 10 ${y})`} style={rulerText}>
          {u}
        </text>
      );
    } else if (Math.abs(u) % 50 === 25) {
      marks.push(<rect key={u} x="13" y={y} width="4" height="1" fill="#888" />);
    } else if (u % 10 === 0) {
      marks.push(<rect key={u} x="15" y={y} width="1" height="1" fill="#777" />);
    }
  }
  return (
    <svg width="17" height="738" viewBox="0 0 17 738">
      {marks}
    </svg>
  );
};

/* data */
const menus = [
  ["文件", "F", 59], ["编辑", "E", 59], ["查看", "V", 60], ["布局", "L", 58], ["对象", "C", 61], ["效果", "C", 62],
  ["位图", "B", 60], ["文本", "X", 60], ["表格", "T", 60], ["工具", "O", 61], ["窗口", "W", 65], ["帮助", "H", 60],
];
const swatches = [
  "#2a211c", "#3e3a39", "#595757", "#727171", "#898989", "#9fa0a0", "#b5b5b6", "#c9caca", "#dcdddd", "#efefef", "#ffffff",
  "#1d2088", "#00a0e9", "#009944", "#fff100", "#e60012", "#e4007f", "#a73b80", "#f08300", "#f4b0b0", "#8a7468", "#cbc7e2",
  "#a79ccb", "#7b93c8", "#7a68ae", "#8f82ae", "#4d628c", "#5a4c6e", "#72869f", "#0092d8", "#9dd3f2", "#b3c8d4", "#94a5ad",
  "#6c7a81", "#464e56", "#4e6e6b", "#3f8672", "#6d9690", "#52a68e", "#57a56c", "#57bccb", "#4ea4b4", "#bccdbf",
];
const handles = [
  [5, 210], [56, 210], [107, 210], [5, 246], [107, 246], [5, 282], [56, 282], [107, 282],
];
const nodes = [
  [13, 218], [103, 218], [13, 278], [103, 278],
];
const disabledSpins = [
  ["起始角度：:", "0.0"],
  ["旋转角度：:", "360.0"],
  ["旋转：:", "1.0"],
  ["范围 (±)：:", "15.0"],
];

const Spin = ({ value, off, w }) => (
  <SpinBox $off={off} $w={w}>
    {value}
    <SpinArrows $off={off}>
      <UpTri />
      <DownTri />
    </SpinArrows>
  </SpinBox>
);
const Drop = ({ children }) => (
  <Select>
    {children}
    <Caret />
  </Select>
);

export default function App() {
  return (
    <Page>
      <GlobalStyle />
      <TitleBar>
        <TitleLogo />
        <TitleText>CorelDRAW 2018 (64-Bit) - 未命名 -1*</TitleText>
        <WinBtn><UserIcon /></WinBtn>
        <WinBtn $ml={4}>
          <svg width="12" height="12" viewBox="0 0 12 12"><rect y="9" width="12" height="3" fill="#111" /></svg>
        </WinBtn>
        <WinBtn $ml={3}>
          <svg width="14" height="15" viewBox="0 0 14 15" fill="none" stroke="#111" strokeWidth="1.200">
            <path d="M1 1h8v3M4 4h9v10H4zM1 1v8h3M4 6h9" />
          </svg>
        </WinBtn>
        <WinBtn $ml={-1}>
          <svg width="13" height="13" viewBox="0 0 13 13" stroke="#111" strokeWidth="1.800"><path d="M1 1l11 11M12 1L1 12" /></svg>
        </WinBtn>
      </TitleBar>

      <MenuBar>
        {menus.map(([t, k, w]) => (
          <MenuItem key={t} $w={w}>
            {t}(<u>{k}</u>)
          </MenuItem>
        ))}
      </MenuBar>

      <Bar>
        <Btn $ml={4}><NewDocIcon /></Btn>
        <Btn $ml={5}><OpenIcon /></Btn>
        <Caret $ml={4} />
        <Btn $ml={9}><SaveIcon /></Btn>
        <Btn $ml={5}><PrintIcon /></Btn>
        <Sep $ml={6} />
        <Btn $ml={4}><CutIcon /></Btn>
        <Btn $ml={6}><CopyIcon /></Btn>
        <Btn $ml={6}><PasteIcon /></Btn>
        <Sep $ml={6} />
        <Btn $ml={5}><UndoIcon /></Btn>
        <Caret $ml={5} />
        <Btn $ml={8}><UndoIcon flip c="#c4c4c4" /></Btn>
        <Caret $ml={4} $c="#c4c4c4" />
        <Sep $ml={11} />
        <Btn $ml={6}><ConnectIcon /></Btn>
        <Sep $ml={6} />
        <Btn $ml={6}><ImportIcon /></Btn>
        <Btn $ml={4}><ImportIcon up /></Btn>
        <Btn $ml={4}><PdfIcon /></Btn>
        <Sep $ml={8} />
        <ZoomCombo $ml={6}>
          52%
          <ComboDrop><Caret /></ComboDrop>
        </ZoomCombo>
        <Btn $ml={6}><FullIcon /></Btn>
        <Sep $ml={6} />
        <Btn $ml={7} $on><RulerIcon /></Btn>
        <Btn $ml={4}><GridIcon /></Btn>
        <Btn $ml={5} $on><GuideIcon /></Btn>
        <Sep $ml={6} />
        <Btn $ml={6}><SnapIcon /></Btn>
        <Plain $ml={9} $w={40}>贴齐(<u>T</u>)</Plain>
        <Caret $ml={9} />
        <Sep $ml={10} />
        <Btn $ml={6}><GearIcon c="#333" /></Btn>
        <Sep $ml={6} />
        <Btn $ml={6}><WindowIcon /></Btn>
        <Plain $ml={4} $w={26}>启动</Plain>
        <Caret $ml={11} />
      </Bar>

      <Bar $h={43}>
        <Btn $ml={6} $w={20}><OriginIcon /></Btn>
        <Stack $ml={9} $w={12}>
          <Axis>X:</Axis>
          <Axis>Y:</Axis>
        </Stack>
        <Stack $w={88}>
          <FieldRow><Field>-125.77 mm</Field></FieldRow>
          <FieldRow><Field $second>208.778 mm</Field></FieldRow>
        </Stack>
        <Sep $ml={6} $h={28} />
        <Stack $ml={7} $w={14}>
          <Axis><WidthIcon /></Axis>
          <Axis><HeightIcon /></Axis>
        </Stack>
        <Stack $ml={2} $w={88}>
          <FieldRow><Field>45.397 mm</Field></FieldRow>
          <FieldRow><Field $second>30.265 mm</Field></FieldRow>
        </Stack>
        <Stack $ml={5} $w={43}>
          <FieldRow><Field>100.0</Field></FieldRow>
          <FieldRow><Field $second>100.0</Field></FieldRow>
        </Stack>
        <Stack $ml={3} $w={11}>
          <Axis>%</Axis>
          <Axis>%</Axis>
        </Stack>
        <Btn $ml={7} $w={14}><PadLock open /></Btn>
        <Sep $ml={8} $h={28} />
        <Btn $ml={7} $w={20}><RotateIcon /></Btn>
        <BoxField $ml={1} $w={50} $h={24}>0.0</BoxField>
        <Btn $ml={9} $w={10}>
          <svg width="10" height="10" viewBox="0 0 10 10" fill="none" stroke="#444"><circle cx="5" cy="4" r="3.500" /></svg>
        </Btn>
        <Sep $ml={9} $h={28} />
        <Btn $ml={8} $w={20}><MirrorH /></Btn>
        <Btn $ml={10} $w={20}><MirrorV /></Btn>
        <Sep $ml={6} $h={28} />
        <Btn $ml={7} $on><CornerRound /></Btn>
        <Btn $ml={7} $w={20}><CornerScallop /></Btn>
        <Btn $ml={10} $w={20}><CornerScallop inv /></Btn>
        <Stack $ml={6} $w={80}>
          <FieldRow><Field>0.0 mm</Field><MiniSpin><DownTri /><UpTri /></MiniSpin></FieldRow>
          <FieldRow><Field $second>0.0 mm</Field><MiniSpin $second><DownTri /><UpTri /></MiniSpin></FieldRow>
        </Stack>
        <Btn $ml={2} $w={14}><CornerStacked /></Btn>
        <Btn $ml={6} $w={18} $on><PadLock /></Btn>
        <Btn $ml={6} $w={14}><CornerStacked /></Btn>
        <Stack $ml={2} $w={80}>
          <FieldRow><Field>0.0 mm</Field><MiniSpin><DownTri /><UpTri /></MiniSpin></FieldRow>
          <FieldRow><Field $second>0.0 mm</Field><MiniSpin $second><DownTri /><UpTri /></MiniSpin></FieldRow>
        </Stack>
        <Btn $ml={5} $on><ScaleCorner /></Btn>
        <Sep $ml={6} $h={28} />
        <Btn $ml={6} $w={20}><PenNib /></Btn>
        <NoneCombo $ml={2}>
          <Picked>无</Picked>
          <ComboDrop><Caret /></ComboDrop>
        </NoneCombo>
        <Sep $ml={6} $h={28} />
        <Btn $ml={9} $w={20}><WrapIcon /></Btn>
        <Sep $ml={7} $h={28} />
        <Btn $ml={8} $w={20}><BackMinus /></Btn>
        <Btn $ml={12} $w={20}><BackMinus off /></Btn>
        <Sep $ml={5} $h={28} />
        <Btn $ml={8} $w={20}><ConvertIcon /></Btn>
        <Sep $ml={8} $h={28} />
        <Btn $ml={13} $w={20}><PlusRound /></Btn>
      </Bar>

      <Bar>
        <Action $ml={8}><Mirror />魔镜</Action>
        <Sep $ml={19} />
        <Action $ml={10}><Plane c="#0c9a4a" />常用</Action>
        <Caret $ml={11} />
        <Action $ml={15} $gap={7}><Plane c="#8e2bc9" />特殊</Action>
        <Caret $ml={11} />
        <Action $ml={15} $gap={7}><Plane c="#1240d8" />超级</Action>
        <Caret $ml={12} />
        <Action $ml={14} $gap={7}><Plane c="#e6101e" />通用</Action>
        <Caret $ml={12} />
        <Sep $ml={11} />
        <Action $ml={9}><ConvertIcon s={16} />转曲</Action>
        <Action $ml={19} $gap={11}><SmartGroup />智能群组</Action>
        <Action $ml={22} $gap={7}><PsBadge />一键PS</Action>
        <Action $ml={20} $gap={9}><PictureIcon />导出图片</Action>
        <Action $ml={22}><CropMarks />拼版角线</Action>
        <Action $ml={22}><GearSmall />插件设置</Action>
        <Sep $ml={19} />
        <Action $ml={10}><SpinArrow c="#2f9e5b" />极速撤销</Action>
        <Sep $ml={19} />
        <Action $ml={9}><SpinArrow c="#22a7ee" flip />极速重复</Action>
      </Bar>

      <Main>
        <ToolBox>
          <SelectedTool><ArrowTool /></SelectedTool>
          <Tool><ShapeTool /></Tool>
          <ToolSep $m={4} />
          <Tool><CropTool /></Tool>
          <Tool><ZoomTool /></Tool>
          <ToolSep $m={4} />
          <Tool><FreehandTool /></Tool>
          <Tool><CurveTool /></Tool>
          <Tool><RectTool /></Tool>
          <Tool><EllipseTool /></Tool>
          <Tool><PolyTool /></Tool>
          <ToolSep $m={4} />
          <Tool><TextGlyph>字</TextGlyph></Tool>
          <ToolSep />
          <Tool><LineTool /></Tool>
          <Tool><ConnectorTool /></Tool>
          <ToolSep />
          <Tool><ShadowTool /></Tool>
          <Tool $corner={false}><CheckerTool /></Tool>
          <ToolSep />
          <Tool><EyeDrop /></Tool>
          <Tool><FillTool /></Tool>
          <Tool $corner={false}><SmartFill /></Tool>
          <ToolSep />
          <Tool $corner={false}><PlusRound s={18} /></Tool>
        </ToolBox>

        <Center>
          <Bar>
            <Action $ml={8}><FishIcon />摸鱼</Action>
            <Sep $ml={14} />
            <Action $ml={10}><ImposeIcon />排版</Action>
            <Caret $ml={12} />
            <Action $ml={13}><BoxIcon />集合</Action>
            <Caret $ml={12} />
            <Sep $ml={11} />
            <Action $ml={9}><GroupOutline />智能群组</Action>
            <Action $ml={17}><PictureIcon />导出图片</Action>
            <Action $ml={17}><DotsIcon />拼版分布</Action>
            <Action $ml={17}><ContourIcon />巡边切割</Action>
            <Action $ml={17}><PsBadge />一键PS</Action>
            <Action $ml={15}><OcrIcon />文字识别</Action>
            <Action $ml={16}><GuideBox />辅助线</Action>
            <Action $ml={16}><AlignCenter />对齐中心</Action>
            <Action $ml={17}><FitPage />适合页面</Action>
            <Action $ml={19} $gap={7}><FontAvatar />字体管理</Action>
          </Bar>

          <Work>
            <DocColumn>
              <TabBar>
                <DocTab>未命名 -1*</DocTab>
                <AddTab>
                  <svg width="11" height="11" viewBox="0 0 11 11" stroke="#a8a8a8" strokeWidth="2"><path d="M5.500 0v11M0 5.500h11" /></svg>
                </AddTab>
              </TabBar>
              <RulerRow>
                <HRuler />
                <RulerUnit>毫米</RulerUnit>
              </RulerRow>
              <CanvasRow>
                <VRuler />
                <Canvas>
                  <PaperPage />
                  <BlueRect />
                  {handles.map(([x, y]) => (
                    <Handle key={`${x}-${y}`} style={{ left: x, top: y }} />
                  ))}
                  {nodes.map(([x, y]) => (
                    <NodeDot key={`${x}-${y}`} style={{ left: x, top: y }} />
                  ))}
                  <CenterMark>
                    <svg width="7" height="7" viewBox="0 0 7 7" stroke="#444" strokeWidth="1.300"><path d="M1 1l5 5M6 1L1 6" /></svg>
                  </CenterMark>
                  <PageCurve />
                </Canvas>
                <VScroll>
                  <ScrollCap />
                  <ThumbZone><ThumbLine /></ThumbZone>
                  <ScrollCap />
                </VScroll>
                <Gutter />
              </CanvasRow>
              <ScrollRow>
                <NavLeft />
                <PageNav>
                  <Btn $ml={3} $w={12} $hh={12}><AddPage /></Btn>
                  <Btn $ml={4} $w={14} $hh={12}><NavArrow bar /></Btn>
                  <Btn $ml={2} $w={14} $hh={12}><NavArrow /></Btn>
                  <Plain $ml={6} $w={40}>1&nbsp;&nbsp;的&nbsp;&nbsp;1</Plain>
                  <Btn $ml={3} $w={14} $hh={12}><NavArrow dir="right" /></Btn>
                  <Btn $ml={1} $w={14} $hh={12}><NavArrow dir="right" bar /></Btn>
                  <Btn $ml={3} $w={12} $hh={12}><AddPage /></Btn>
                  <PageTab>页 1</PageTab>
                  <PageTabLine width="46" height="17" viewBox="0 0 46 17" fill="none" stroke="#8a8a8a">
                    <path d="M0 0l5 16h35L45 0" />
                  </PageTabLine>
                  <DotGrip $w={7} $h={14} $ml={624} />
                </PageNav>
                <ScrollFill $w={18} />
                <ScrollFill $w={30} $bg="#fff" />
                <HTrack><HThumb /></HTrack>
                <ScrollFill $w={19} />
                <ZoomCorner><ZoomDots /></ZoomCorner>
              </ScrollRow>
              <DocPalette>
                <DotGrip $ml={3} />
                <RightTri $ml={9} />
                <Btn $ml={8} $w={18} $hh={18}><EyeDrop tip="#c0502a" /></Btn>
                <Btn $w={18} $hh={18}><Chevron d="left" /></Btn>
                <DocSwatch $ml={1}><CrossBox s={16} /></DocSwatch>
                <DocSwatch $c="#00a0e9" $ml={-1} />
                <Plain $ml={1420}><Chevron d="right" s={14} /></Plain>
                <Plain $ml={3}><DoubleRight /></Plain>
              </DocPalette>
            </DocColumn>

            <Docker>
              <DockerHead>
                <HeadTitle>使对象适合路径</HeadTitle>
                <Plain $ml={0} $w={16}><DoubleRight c="#c0c0c0" /></Plain>
                <Plain $ml={0} $w={18}>
                  <svg width="10" height="10" viewBox="0 0 10 10" stroke="#b5b5b5" strokeWidth="1.500"><path d="M1 1l8 8M9 1L1 9" /></svg>
                </Plain>
              </DockerHead>
              <DockerBody>
                <Panel>
                  <SectionTitle>对象：:</SectionTitle>
                  <Row><Lbl>选定部分:</Lbl>已选定 1 个对象</Row>
                  <Row><Lbl>来源：:</Lbl><Check />保留原件</Row>
                  <Row><Lbl>输出：:</Lbl><Check />为所有对象分组</Row>
                  <Row $h={24} $mt={2}>
                    <Lbl $up>重复：:</Lbl>
                    <Spin value="0" w={126} />
                    <InfoDot>i</InfoDot>
                  </Row>
                  <Rule $mt={9} />
                  <SectionTitle $mt={4}>路径：:</SectionTitle>
                  <Row><Lbl $w={93}>使用的对象：:</Lbl>无</Row>
                  <Row><Lbl $w={93}>子路径：:</Lbl><Plain $w={68}>子路径：:</Plain>视为邻接</Row>
                  <Rule $mt={6} />
                  <SectionTitle $mt={4}>对象定位：:</SectionTitle>
                  <Row $h={24} $mt={2}><Lbl $up $w={77}>顺序：:</Lbl><Drop>选择：选择顺序</Drop></Row>
                  <Row $h={24} $mt={5}><Lbl $up $w={77}>分布：:</Lbl><Drop>统一对象间距</Drop></Row>
                  <Row $h={24} $mt={5}><Lbl $up $w={77}>参考：:</Lbl><Drop>原始对象</Drop></Row>
                  <Row $top $mt={3}>
                    <Lbl $w={77}>原始:</Lbl>
                    <OriginGrid>
                      {[0, 1, 2, 3, 4, 5, 6, 7, 8].map((i) => (
                        <OriginDot key={i} $on={i === 4} />
                      ))}
                    </OriginGrid>
                  </Row>
                  <Rule $mt={6} />
                  <SectionTitle $mt={4}>旋转：:</SectionTitle>
                  <Row><Lbl>自动旋转：:</Lbl></Row>
                  <Row><Lbl $w={90}>重置：:</Lbl><Check />忽略初始旋转</Row>
                  <Rule $mt={6} />
                  <SectionTitle $mt={4}>修改旋转：:</SectionTitle>
                  <Row $h={24} $mt={2}><Lbl $up $w={90}>样式:</Lbl><Drop>无</Drop></Row>
                  {disabledSpins.map(([l, v]) => (
                    <Row key={l} $h={24} $mt={5}>
                      <Lbl $up $w={90} $off>{l}</Lbl>
                      <Spin value={v} off />
                    </Row>
                  ))}
                  <Row $mt={3}><Lbl $w={90}>方向:</Lbl><Check />顺时针</Row>
                  <Rule $mt={19} />
                  <ApplyBtn>应用</ApplyBtn>
                </Panel>
                <TabStrip>
                  <VTab>
                    <svg width="16" height="11" viewBox="0 0 16 11" fill="none">
                      <path d="M2 9C4 3 7 2 8 2" stroke="#1b7fc4" strokeWidth="2.400" />
                      <path d="M8 2c2 0 4 2 6 7" stroke="#2a9a5a" strokeWidth="2.400" />
                      <circle cx="8" cy="2.500" r="2" fill="#ef6a2a" />
                    </svg>
                    <VTabText>使对象适合路径</VTabText>
                  </VTab>
                  <VPlus><PlusRound s={17} /></VPlus>
                </TabStrip>
              </DockerBody>
            </Docker>
          </Work>
        </Center>

        <Palette>
          <PaletteTop>
            <DotGrip $w={15} $h={5} />
            <RightTri />
            <EyeDrop tip="#c8c8c8" c="#c8c8c8" />
            <Chevron d="up" />
          </PaletteTop>
          <Swatches>
            <NoneSwatch><CrossBox s={15} /></NoneSwatch>
            {swatches.map((c, i) => (
              <Swatch key={`${c}${i}`} $c={c} />
            ))}
          </Swatches>
          <PaletteEnd>
            <Chevron d="down" s={14} />
            <DoubleRight />
          </PaletteEnd>
        </Palette>
      </Main>

      <StatusBar>
        <Plain $ml={8} $w={108}>( 619.756, 285.953 )</Plain>
        <RightTri $ml={12} />
        <Plain $ml={30} $w={1299}>矩形 于 图层 1</Plain>
        <MonitorIcon />
        <Btn $ml={18} $w={18} $hh={20}><FillTool /></Btn>
        <StatusSwatch />
        <Plain $ml={4} $w={153}>C: 100 M: 0 Y: 0 K: 0</Plain>
        <Sep $h={22} />
        <Btn $ml={12} $w={16} $hh={20}><PenNib /></Btn>
        <NoneBox><CrossBox s={20} /></NoneBox>
        <Plain $ml={4}>无</Plain>
        <Watermark>
          <svg width="42" height="37" viewBox="0 0 42 37" fill="none" stroke="#e3706c">
            <path d="M2 3c3 6 9 8 12 11v22M40 3c-3 6-9 8-12 11v22" strokeWidth="6" />
            <path d="M14 16c3 2 11 2 14 0M21 20v16" strokeWidth="4" />
          </svg>
          <WatermarkName>華印社區</WatermarkName>
          <WatermarkUrl>www.52cnp.com</WatermarkUrl>
        </Watermark>
      </StatusBar>
    </Page>
  );
}
